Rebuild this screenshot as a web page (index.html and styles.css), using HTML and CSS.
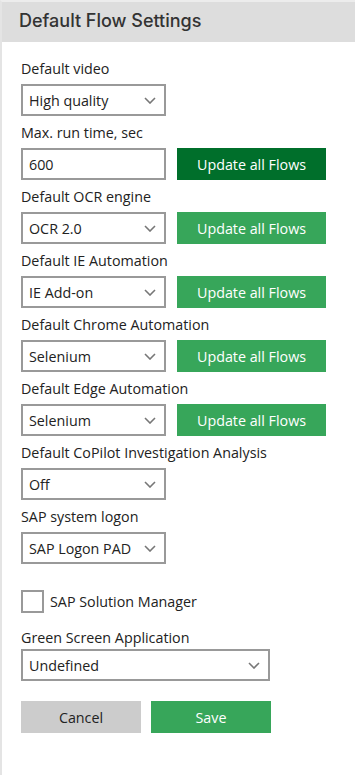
FILE: index.html
```html
<!DOCTYPE html>
<html lang="en">
<head>
    <meta charset="UTF-8">
    <meta name="viewport" content="width=device-width, initial-scale=1.0">
    <title>Default Flow Settings</title>
    <link rel="stylesheet" href="styles.css">
</head>
<body>
    <div class="panel">
        <h1 class="panel-title">Default Flow Settings</h1>

        <form class="settings">
            <div class="field">
                <label>Default video</label>
                <div class="select"><span>High quality</span><svg class="chevron" viewBox="0 0 12 7"><path d="M1 1l5 5 5-5"/></svg></div>
            </div>

            <div class="field">
                <label>Max. run time, sec</label>
                <div class="row">
                    <input class="input" type="text" value="600">
                    <button type="button" class="btn btn-dark">Update all Flows</button>
                </div>
            </div>

            <div class="field">
                <label>Default OCR engine</label>
                <div class="row">
                    <div class="select"><span>OCR 2.0</span><svg class="chevron" viewBox="0 0 12 7"><path d="M1 1l5 5 5-5"/></svg></div>
                    <button type="button" class="btn btn-green">Update all Flows</button>
                </div>
            </div>

            <div class="field">
                <label>Default IE Automation</label>
                <div class="row">
                    <div class="select"><span>IE Add-on</span><svg class="chevron" viewBox="0 0 12 7"><path d="M1 1l5 5 5-5"/></svg></div>
                    <button type="button" class="btn btn-green">Update all Flows</button>
                </div>
            </div>

            <div class="field">
                <label>Default Chrome Automation</label>
                <div class="row">
                    <div class="select"><span>Selenium</span><svg class="chevron" viewBox="0 0 12 7"><path d="M1 1l5 5 5-5"/></svg></div>
                    <button type="button" class="btn btn-green">Update all Flows</button>
                </div>
            </div>

            <div class="field">
                <label>Default Edge Automation</label>
                <div class="row">
                    <div class="select"><span>Selenium</span><svg class="chevron" viewBox="0 0 12 7"><path d="M1 1l5 5 5-5"/></svg></div>
                    <button type="button" class="btn btn-green">Update all Flows</button>
                </div>
            </div>

            <div class="field">
                <label>Default CoPilot Investigation Analysis</label>
                <div class="select"><span>Off</span><svg class="chevron" viewBox="0 0 12 7"><path d="M1 1l5 5 5-5"/></svg></div>
            </div>

            <div class="field">
                <label>SAP system logon</label>
                <div class="select"><span>SAP Logon PAD</span><svg class="chevron" viewBox="0 0 12 7"><path d="M1 1l5 5 5-5"/></svg></div>
            </div>

            <label class="check">
                <span class="check-box"></span>
                SAP Solution Manager
            </label>

            <div class="field field-wide">
                <label>Green Screen Application</label>
                <div class="select select-wide"><span>Undefined</span><svg class="chevron" viewBox="0 0 12 7"><path d="M1 1l5 5 5-5"/></svg></div>
            </div>

            <div class="actions">
                <button type="button" class="btn btn-cancel">Cancel</button>
                <button type="button" class="btn btn-green">Save</button>
            </div>
        </form>
    </div>
</body>
</html>
```

FILE: styles.css
```css
/* reset */
* {
    margin: 0;
    padding: 0;
    box-sizing: border-box;
}

body {
    background: #ffffff;
    font-family: 'Open Sans', 'Noto Sans', sans-serif;
    color: #222222;
}

/* panel frame */
.panel {
    min-height: 775px;
    border-top: 2px solid #ececec;
    border-left: 2px solid #e4e4e4;
}

.panel-title {
    height: 40px;
    background: #dddddd;
    padding-left: 17px;
    font-family: 'Inter', sans-serif;
    font-size: 18px;
    font-weight: 500;
    line-height: 38px;
    color: #333333;
}

/* form */
.settings {
    padding: 17px 0 0 19px;
}

.field {
    margin-bottom: 7px;
}

.field label {
    display: block;
    font-size: 14.3px;
    line-height: 20px;
    margin-bottom: 5px;
}

.row {
    display: flex;
    gap: 11px;
}

.select,
.input {
    width: 145px;
    height: 32px;
    border: 2px solid #999999;
    background: #ffffff;
    font-family: inherit;
    font-size: 14.3px;
    color: #222222;
    padding: 0 6px;
}

.select {
    display: flex;
    align-items: center;
    justify-content: space-between;
}

.select-wide {
    width: 249px;
}

.chevron {
    width: 12px;
    height: 7px;
    margin-right: 2px;
    fill: none;
    stroke: #777777;
    stroke-width: 1.6;
}

.input {
    outline: none;
}

/* buttons */
.btn {
    width: 149px;
    height: 32px;
    border: none;
    font-family: inherit;
    font-size: 14.3px;
    color: #ffffff;
    cursor: pointer;
}

.btn-dark {
    background: #006f2b;
}

.btn-green {
    background: #37a65a;
}

.btn-cancel {
    background: #cccccc;
    color: #222222;
}

/* checkbox */
.check {
    display: flex;
    align-items: center;
    gap: 6px;
    margin-top: 26px;
    font-size: 14.3px;
    line-height: 23px;
}

.check-box {
    width: 23px;
    height: 23px;
    border: 2px solid #999999;
}

.field-wide {
    margin-top: 15px;
}

.field-wide label {
    margin-bottom: 1px;
}

.actions {
    display: flex;
    gap: 10px;
    margin-top: 20px;
}

.actions .btn {
    width: 120px;
}
```
